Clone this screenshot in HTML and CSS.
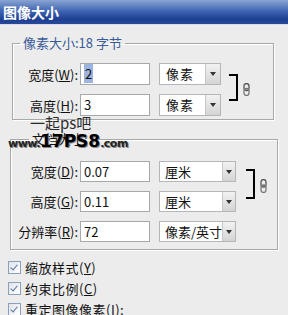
FILE: index.html
```html
<!DOCTYPE html>
<html lang="zh-CN">
<head>
    <meta charset="UTF-8">
    <title>图像大小</title>
    <link rel="stylesheet" href="styles.css">
</head>
<body>
    <div class="titlebar">图像大小</div>

    <fieldset class="group pixel-group">
        <legend class="legend-blue">像素大小:18 字节</legend>
        <div class="rows">
            <div class="row">
                <label class="lbl">宽度(<u>W</u>):</label>
                <div class="field"><span class="sel">2</span></div>
                <div class="combo"><span class="combo-text">像素</span><span class="arrow"></span></div>
            </div>
            <div class="row">
                <label class="lbl">高度(<u>H</u>):</label>
                <div class="field">3</div>
                <div class="combo"><span class="combo-text">像素</span><span class="arrow"></span></div>
            </div>
            <div class="link link-pixel">
                <div class="bracket"></div>
                <svg class="chain" width="8" height="13" viewBox="0 0 8 13">
                    <rect x="1" y="0.5" width="5" height="7" rx="2.5" fill="none" stroke="#555" stroke-width="1.3"/>
                    <rect x="1" y="5.5" width="5" height="7" rx="2.5" fill="none" stroke="#777" stroke-width="1.3"/>
                </svg>
            </div>
        </div>
    </fieldset>

    <fieldset class="group doc-group">
        <legend class="legend-plain">文档大小:</legend>
        <div class="rows">
            <div class="row">
                <label class="lbl">宽度(<u>D</u>):</label>
                <div class="field">0.07</div>
                <div class="combo wide"><span class="combo-text">厘米</span><span class="arrow"></span></div>
            </div>
            <div class="row">
                <label class="lbl">高度(<u>G</u>):</label>
                <div class="field">0.11</div>
                <div class="combo wide"><span class="combo-text">厘米</span><span class="arrow"></span></div>
            </div>
            <div class="row">
                <label class="lbl">分辨率(<u>R</u>):</label>
                <div class="field">72</div>
                <div class="combo wide"><span class="combo-text">像素/英寸</span><span class="arrow"></span></div>
            </div>
            <div class="link link-doc">
                <div class="bracket"></div>
                <svg class="chain" width="8" height="14" viewBox="0 0 8 14">
                    <rect x="1" y="0.5" width="5" height="7.5" rx="2.5" fill="none" stroke="#555" stroke-width="1.3"/>
                    <rect x="1" y="6" width="5" height="7.5" rx="2.5" fill="none" stroke="#777" stroke-width="1.3"/>
                </svg>
            </div>
        </div>
    </fieldset>

    <div class="checks">
        <div class="check"><span class="box"></span>缩放样式(<u>Y</u>)</div>
        <div class="check"><span class="box"></span>约束比例(<u>C</u>)</div>
        <div class="check"><span class="box"></span>重定图像像素(<u>I</u>):</div>
    </div>

    <div class="watermark">
        <div class="wm-cn">一起ps吧</div>
        <div class="wm-url">www.<b>17PS8</b>.com</div>
    </div>
</body>
</html>
```

FILE: styles.css
```css
body {
    margin: 0;
    width: 288px;
    height: 315px;
    overflow: hidden;
    background: #ececec;
    font-family: "Noto Sans CJK SC", "DejaVu Sans", sans-serif;
    font-size: 13px;
    color: #111;
    position: relative;
}
.titlebar {
    height: 25px;
    line-height: 24px;
    padding-left: 3px;
    color: #fff;
    font-weight: bold;
    font-size: 14px;
    background: linear-gradient(#8aa4d2, #4166b4 45%, #1f3f92 80%, #284a9a);
    border-bottom: 1px solid #d8dde8;
    box-sizing: border-box;
}
.group {
    margin: 0;
    padding: 0;
    border: 1px solid #a8a8a8;
    box-shadow: 1px 1px 0 #fff, inset 1px 1px 0 #fff;
    position: relative;
}
.group legend {
    line-height: 16px;
    padding: 0 3px;
}
.pixel-group {
    margin: 10px 0 0 12px;
    width: 260px;
}
.pixel-group legend {
    margin-left: 7px;
}
.legend-blue {
    color: #3a5b98;
}
.doc-group {
    margin: 11px 0 0 10px;
    width: 266px;
}
.doc-group legend {
    margin-left: 18px;
}
.rows {
    position: relative;
    display: flex;
    flex-direction: column;
    gap: 9px;
}
.pixel-group .rows {
    padding: 12px 0 3px;
}
.doc-group .rows {
    padding: 14px 0 7px;
}
.row {
    display: flex;
    align-items: center;
    height: 22px;
}
.doc-group .row {
    height: 21px;
}
.lbl {
    width: 66px;
    text-align: right;
    padding-right: 2px;
    box-sizing: border-box;
}
.pixel-group .lbl {
    width: 67px;
}
.doc-group .lbl {
    width: 69px;
}
.field {
    width: 70px;
    height: 100%;
    box-sizing: border-box;
    background: #fff;
    border: 1px solid #a5a9ae;
    padding-left: 3px;
    line-height: 20px;
}
.doc-group .field {
    line-height: 19px;
}
.sel {
    background: #9db4de;
    padding: 0 1px;
}
.combo {
    margin-left: 9px;
    width: 62px;
    height: 100%;
    box-sizing: border-box;
    background: #fff;
    border: 1px solid #b3b6ba;
    display: flex;
}
.combo.wide {
    width: 77px;
}
.combo-text {
    flex: 1;
    padding-left: 6px;
    line-height: 20px;
    letter-spacing: 1px;
    white-space: nowrap;
    overflow: hidden;
}
.doc-group .combo-text {
    line-height: 19px;
    letter-spacing: 0;
    padding-left: 5px;
}
.arrow {
    width: 14px;
    border-left: 1px solid #c8c8c8;
    background: linear-gradient(#f2f2f2, #d4d4d4);
    position: relative;
}
.combo.wide .arrow {
    width: 12px;
}
.arrow::after {
    content: "";
    position: absolute;
    left: 4px;
    top: 8px;
    border-left: 3px solid transparent;
    border-right: 3px solid transparent;
    border-top: 4px solid #333;
}
.combo.wide .arrow::after {
    left: 3px;
}
.link {
    position: absolute;
    display: flex;
    align-items: center;
    gap: 5px;
}
.link-pixel {
    left: 216px;
    top: 23px;
}
.link-pixel .bracket {
    height: 23px;
}
.link-doc {
    left: 235px;
    top: 22px;
}
.link-doc .bracket {
    height: 26px;
}
.bracket {
    width: 7px;
    border: 2px solid #000;
    border-left: none;
}
.chain {
    margin-top: 4px;
}
.checks {
    margin: 9px 0 0 8px;
    display: flex;
    flex-direction: column;
    gap: 4px;
}
.check {
    display: flex;
    align-items: center;
    height: 17px;
    letter-spacing: 0.5px;
}
.box {
    width: 11px;
    height: 11px;
    border: 1px solid #8aa0bc;
    background: linear-gradient(135deg, #dfe3e8, #fff);
    margin-right: 4px;
    position: relative;
}
.box::after {
    content: "";
    position: absolute;
    left: 3px;
    top: 1px;
    width: 3px;
    height: 6px;
    border: solid #5a72a8;
    border-width: 0 1.5px 1.5px 0;
    transform: rotate(40deg);
}
.watermark {
    position: absolute;
    left: 8px;
    top: 114px;
}
.wm-cn {
    margin-left: 22px;
    font-size: 15px;
    color: #2a2a2a;
    line-height: 17px;
}
.wm-url {
    font-family: "DejaVu Sans", sans-serif;
    font-weight: bold;
    font-size: 11px;
    color: #222;
    line-height: 20px;
    letter-spacing: -0.5px;
    text-shadow: 1px 1px 0 #888;
}
.wm-url b {
    font-size: 17px;
    font-weight: 900;
    letter-spacing: 0;
    color: #000;
}
```
